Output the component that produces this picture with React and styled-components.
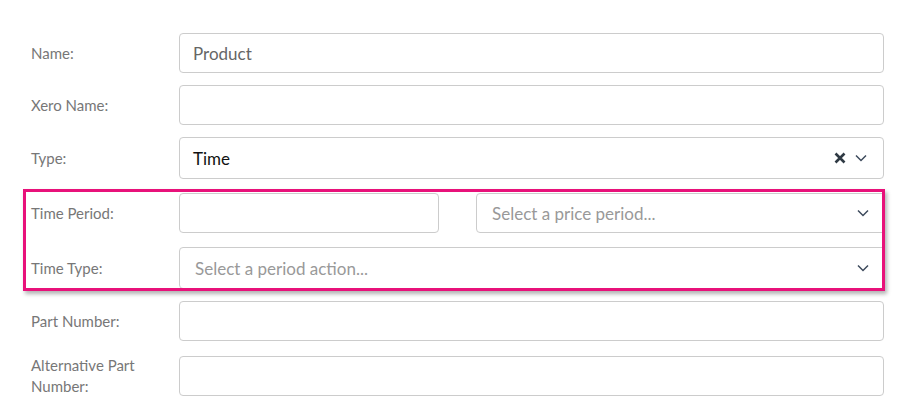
import React from "react";
import styled, { createGlobalStyle } from "styled-components";

const GlobalStyle = createGlobalStyle`
  body {
    margin: 0;
    background: #fff;
    font-family: Lato, "Open Sans", sans-serif;
  }
`;

const Chevron = () => (
  <svg width="12" height="8" viewBox="0 0 12 8">
    <path d="M1 1.5 L6 6.5 L11 1.5" fill="none" stroke="#3d4a5c" strokeWidth="1.5" />
  </svg>
);

const Cross = () => (
  <svg width="12" height="12" viewBox="0 0 12 12">
    <path d="M1.5 1.5 L10.5 10.5 M10.5 1.5 L1.5 10.5" stroke="#2f3a44" strokeWidth="2.6" />
  </svg>
);

const Form = () => (
  <Page>
    <Row>
      <Label>Name:</Label>
      <Input>
        <Value muted>Product</Value>
      </Input>
    </Row>
    <Row>
      <Label>Xero Name:</Label>
      <Input />
    </Row>
    <Row gap={10}>
      <Label>Type:</Label>
      <Input tall>
        <Value>Time</Value>
        <Icons>
          <Cross />
          <Chevron />
        </Icons>
      </Input>
    </Row>

    <Highlight>
      <Row gap={14}>
        <Label>Time Period:</Label>
        <Split>
          <Input />
          <Input>
            <Placeholder>Select a price period...</Placeholder>
            <Icons>
              <Chevron />
            </Icons>
          </Input>
        </Split>
      </Row>
      <Row>
        <Label>Time Type:</Label>
        <Input tall>
          <Placeholder>Select a period action...</Placeholder>
          <Icons>
            <Chevron />
          </Icons>
        </Input>
      </Row>
    </Highlight>

    <Row gap={14}>
      <Label>Part Number:</Label>
      <Input />
    </Row>
    <Row>
      <Label>Alternative Part Number:</Label>
      <Input />
    </Row>
  </Page>
);

const Page = styled.div`
  display: flex;
  flex-direction: column;
  padding: 33px 24px 0 31px;
  height: 398px;
  box-sizing: border-box;
  overflow: hidden;
`;

const Row = styled.div`
  display: flex;
  align-items: center;
  flex-shrink: 0;
  margin-bottom: ${p => (p.gap ? p.gap : 12)}px;
`;

const Label = styled.div`
  width: 148px;
  flex-shrink: 0;
  padding-right: 30px;
  box-sizing: border-box;
  font-size: 15px;
  line-height: 21px;
  color: #777;
`;

const Input = styled.div`
  flex: 1;
  height: ${p => (p.tall ? 42 : 40)}px;
  border: 1px solid #ccc;
  border-radius: 4px;
  box-sizing: border-box;
  display: flex;
  align-items: center;
  padding: 0 14px 0 13px;
  background: #fff;
`;

const Value = styled.span`
  font-size: 17px;
  color: ${p => (p.muted ? "#666" : "#111")};
`;

const Placeholder = styled.span`
  font-size: 17px;
  color: #999;
  padding-left: 2px;
`;

const Icons = styled.div`
  margin-left: auto;
  display: flex;
  align-items: center;
  gap: 9px;
  padding-right: 2px;
`;

const Split = styled.div`
  flex: 1;
  display: grid;
  grid-template-columns: 260px 1fr;
  column-gap: 37px;
  margin-right: -4px;
`;

const Highlight = styled.div`
  flex-shrink: 0;
  margin: 0 -1px 10px -8px;
  padding: 1px 0 0 5px;
  height: 102px;
  box-sizing: border-box;
  border: 3px solid #e8117a;
  box-shadow: 2px 3px 4px rgba(0, 0, 0, 0.3);
  overflow: hidden;

  ${Row}:last-child {
    margin-bottom: 0;
    margin-right: -4px;
  }
`;

const App = () => (
  <>
    <GlobalStyle />
    <Form />
  </>
);

export default App;
